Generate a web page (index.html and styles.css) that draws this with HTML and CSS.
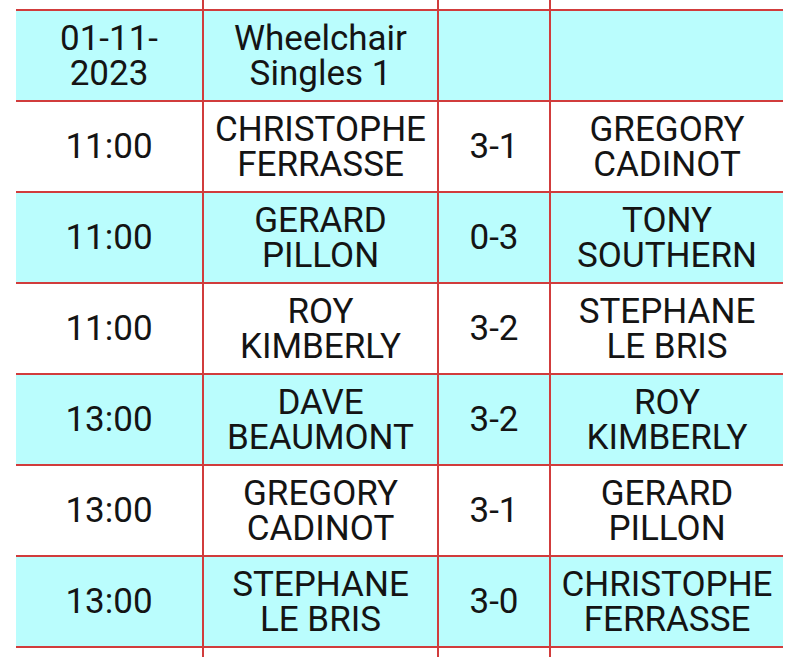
FILE: index.html
```html
<!DOCTYPE html>
<html>
<head>
<meta charset="utf-8">
<link rel="stylesheet" href="styles.css">
</head>
<body>
<table class="results">
  <colgroup>
    <col class="c-time">
    <col class="c-player">
    <col class="c-score">
    <col class="c-player2">
  </colgroup>
  <tbody>
    <tr class="stub"><td></td><td></td><td></td><td></td></tr>
    <tr class="alt"><td>01-11-<br>2023</td><td>Wheelchair Singles 1</td><td></td><td></td></tr>
    <tr><td>11:00</td><td>CHRISTOPHE FERRASSE</td><td>3-1</td><td>GREGORY CADINOT</td></tr>
    <tr class="alt"><td>11:00</td><td>GERARD PILLON</td><td>0-3</td><td>TONY SOUTHERN</td></tr>
    <tr><td>11:00</td><td>ROY KIMBERLY</td><td>3-2</td><td>STEPHANE LE BRIS</td></tr>
    <tr class="alt"><td>13:00</td><td>DAVE BEAUMONT</td><td>3-2</td><td>ROY KIMBERLY</td></tr>
    <tr><td>13:00</td><td>GREGORY CADINOT</td><td>3-1</td><td>GERARD PILLON</td></tr>
    <tr class="alt"><td>13:00</td><td>STEPHANE LE BRIS</td><td>3-0</td><td>CHRISTOPHE FERRASSE</td></tr>
    <tr class="stub"><td></td><td></td><td></td><td></td></tr>
  </tbody>
</table>
</body>
</html>
```
FILE: styles.css
```css
html, body {
  margin: 0;
  padding: 0;
  background: #ffffff;
  overflow: hidden;
}
body {
  font-family: Roboto, "Liberation Sans", sans-serif;
  color: #141414;
}
.results {
  margin-left: 16px;
  width: 767px;
  table-layout: fixed;
  border-collapse: collapse;
}
.c-time { width: 187px; }
.c-player { width: 235px; }
.c-score { width: 112px; }
.c-player2 { width: 233px; }
.results td {
  border: 2px solid #d13c3c;
  height: 89px;
  padding: 0 8px;
  text-align: center;
  vertical-align: middle;
  font-size: 35px;
  line-height: 35px;
}
.results td:first-child { border-left: none; }
.results td:last-child { border-right: none; }
.results tr.stub td {
  height: 9px;
  padding: 0;
}
.results tr.stub:first-child td { border-top: none; }
.results tr.stub:last-child td { border-bottom: none; }
.results tr.alt td { background: #bafdfd; }
```
